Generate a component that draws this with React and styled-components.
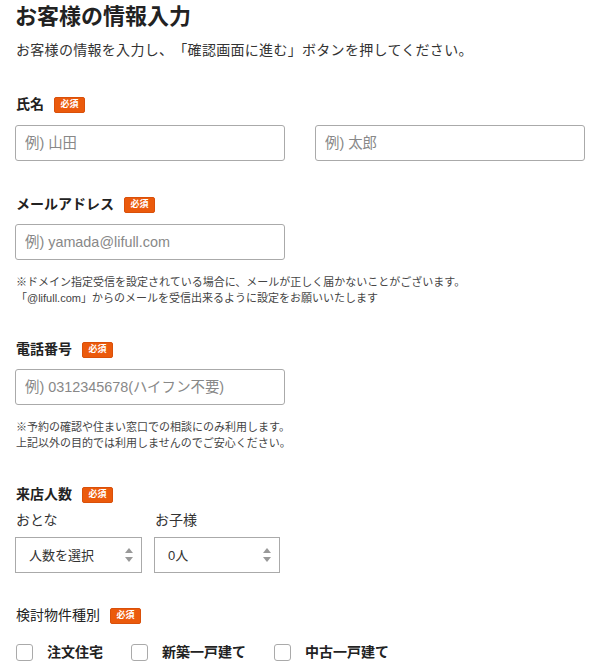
import React from 'react'
import styled, { createGlobalStyle } from 'styled-components'

const GlobalStyle = createGlobalStyle`
  body {
    margin: 0;
    background: #fff;
    color: #333;
    font-family: "Liberation Sans", "Noto Sans CJK JP", sans-serif;
    text-spacing-trim: space-all;
  }
`

const Page = styled.main`
  padding: 0 15px 20px;
`

const Title = styled.h1`
  margin: 0;
  font-size: 22px;
  line-height: 34px;
  font-weight: 700;
  color: #222;
`

const Lead = styled.p`
  margin: 6px 0 0 1px;
  font-size: 14px;
  line-height: 21px;
  letter-spacing: 0.3px;
`

const Field = styled.section`
  margin-top: ${p => p.$top || 33}px;
`

const LabelRow = styled.div`
  display: flex;
  align-items: center;
  gap: 10px;
  margin: 0 0 ${p => p.$gap ?? 10}px 1px;
`

const Label = styled.span`
  font-size: 14px;
  line-height: 21px;
  font-weight: ${p => (p.$light ? 400 : 700)};
  color: #222;
`

const Badge = styled.span`
  display: inline-flex;
  align-items: center;
  justify-content: center;
  box-sizing: border-box;
  width: 31px;
  height: 16px;
  background: #eb5a0c;
  border: 1px solid #d9500a;
  border-radius: 2px;
  color: #fff;
  font-size: 9px;
  font-weight: 700;
  line-height: 1;
`

const TwoCols = styled.div`
  display: grid;
  grid-template-columns: 270px 270px;
  gap: 30px;
`

const Input = styled.input`
  box-sizing: border-box;
  display: block;
  width: 270px;
  height: 36px;
  margin: 0;
  border: 1px solid #aaa;
  border-radius: 3px;
  padding: 0 9px;
  font: inherit;
  font-size: 14.4px;
  color: #333;
  background: #fff;

  &::placeholder {
    color: #888;
  }
`

const Note = styled.p`
  margin: 14px 0 0 1px;
  font-size: 11px;
  line-height: 16px;
  color: #444;
`

const SubLabels = styled.div`
  display: grid;
  grid-template-columns: 127px 126px;
  column-gap: 12px;
  row-gap: 6px;
`

const SubLabel = styled.span`
  font-size: 14px;
  line-height: 21px;
  padding-left: 1px;
  color: #333;
`

const SelectWrap = styled.div`
  position: relative;
  height: 36px;
`

const Select = styled.select`
  box-sizing: border-box;
  width: 100%;
  height: 100%;
  margin: 0;
  appearance: none;
  border: 1px solid #aaa;
  border-radius: 0;
  padding: 0 0 0 13px;
  background: #fff;
  font: inherit;
  font-size: 13px;
  color: #333;
`

const Arrows = styled.span`
  position: absolute;
  right: 9px;
  top: 50%;
  transform: translateY(-50%);
  display: flex;
  flex-direction: column;
  gap: 4px;
  pointer-events: none;

  &::before,
  &::after {
    content: '';
    width: 0;
    height: 0;
    border-left: 4px solid transparent;
    border-right: 4px solid transparent;
  }
  &::before {
    border-bottom: 5px solid #999;
  }
  &::after {
    border-top: 5px solid #999;
  }
`

const Checks = styled.div`
  display: flex;
  align-items: center;
  margin-top: 16px;
  padding-left: 1px;
`

const CheckItem = styled.label`
  display: flex;
  align-items: center;
  gap: 14px;
  margin-right: 28px;
  font-size: 14px;
  line-height: 21px;
  font-weight: 700;
  color: #222;
`

const Box = styled.span`
  box-sizing: border-box;
  width: 17px;
  height: 17px;
  border: 1.5px solid #aaa;
  border-radius: 3px;
  background: #fff;
`

const Required = () => <Badge>必須</Badge>

const PersonSelect = ({ value, options }) => (
  <SelectWrap>
    <Select defaultValue={value}>
      {options.map(o => (
        <option key={o} value={o}>{o}</option>
      ))}
    </Select>
    <Arrows />
  </SelectWrap>
)

const App = () => {
  const kinds = ['注文住宅', '新築一戸建て', '中古一戸建て']

  return (
    <>
      <GlobalStyle />
      <Page>
        <Title>お客様の情報入力</Title>
        <Lead>お客様の情報を入力し、「確認画面に進む」ボタンを押してください。</Lead>

        <Field>
          <LabelRow>
            <Label>氏名</Label>
            <Required />
          </LabelRow>
          <TwoCols>
            <Input placeholder="例) 山田" />
            <Input placeholder="例) 太郎" />
          </TwoCols>
        </Field>

        <Field>
          <LabelRow $gap={9}>
            <Label>メールアドレス</Label>
            <Required />
          </LabelRow>
          <Input placeholder="例) yamada@lifull.com" />
          <Note>
            ※ドメイン指定受信を設定されている場合に、メールが正しく届かないことがございます。
            <br />
            「@lifull.com」からのメールを受信出来るように設定をお願いいたします
          </Note>
        </Field>

        <Field>
          <LabelRow $gap={9}>
            <Label>電話番号</Label>
            <Required />
          </LabelRow>
          <Input placeholder="例) 0312345678(ハイフン不要)" />
          <Note>
            ※予約の確認や住まい窓口での相談にのみ利用します。
            <br />
            上記以外の目的では利用しませんのでご安心ください。
          </Note>
        </Field>

        <Field>
          <LabelRow $gap={5}>
            <Label>来店人数</Label>
            <Required />
          </LabelRow>
          <SubLabels>
            <SubLabel>おとな</SubLabel>
            <SubLabel>お子様</SubLabel>
            <PersonSelect value="人数を選択" options={['人数を選択', '1人', '2人', '3人', '4人']} />
            <PersonSelect value="0人" options={['0人', '1人', '2人', '3人']} />
          </SubLabels>
        </Field>

        <Field $top={32}>
          <LabelRow $gap={0}>
            <Label $light>検討物件種別</Label>
            <Required />
          </LabelRow>
          <Checks>
            {kinds.map(k => (
              <CheckItem key={k}>
                <Box />
                {k}
              </CheckItem>
            ))}
          </Checks>
        </Field>
      </Page>
    </>
  )
}

export default App
